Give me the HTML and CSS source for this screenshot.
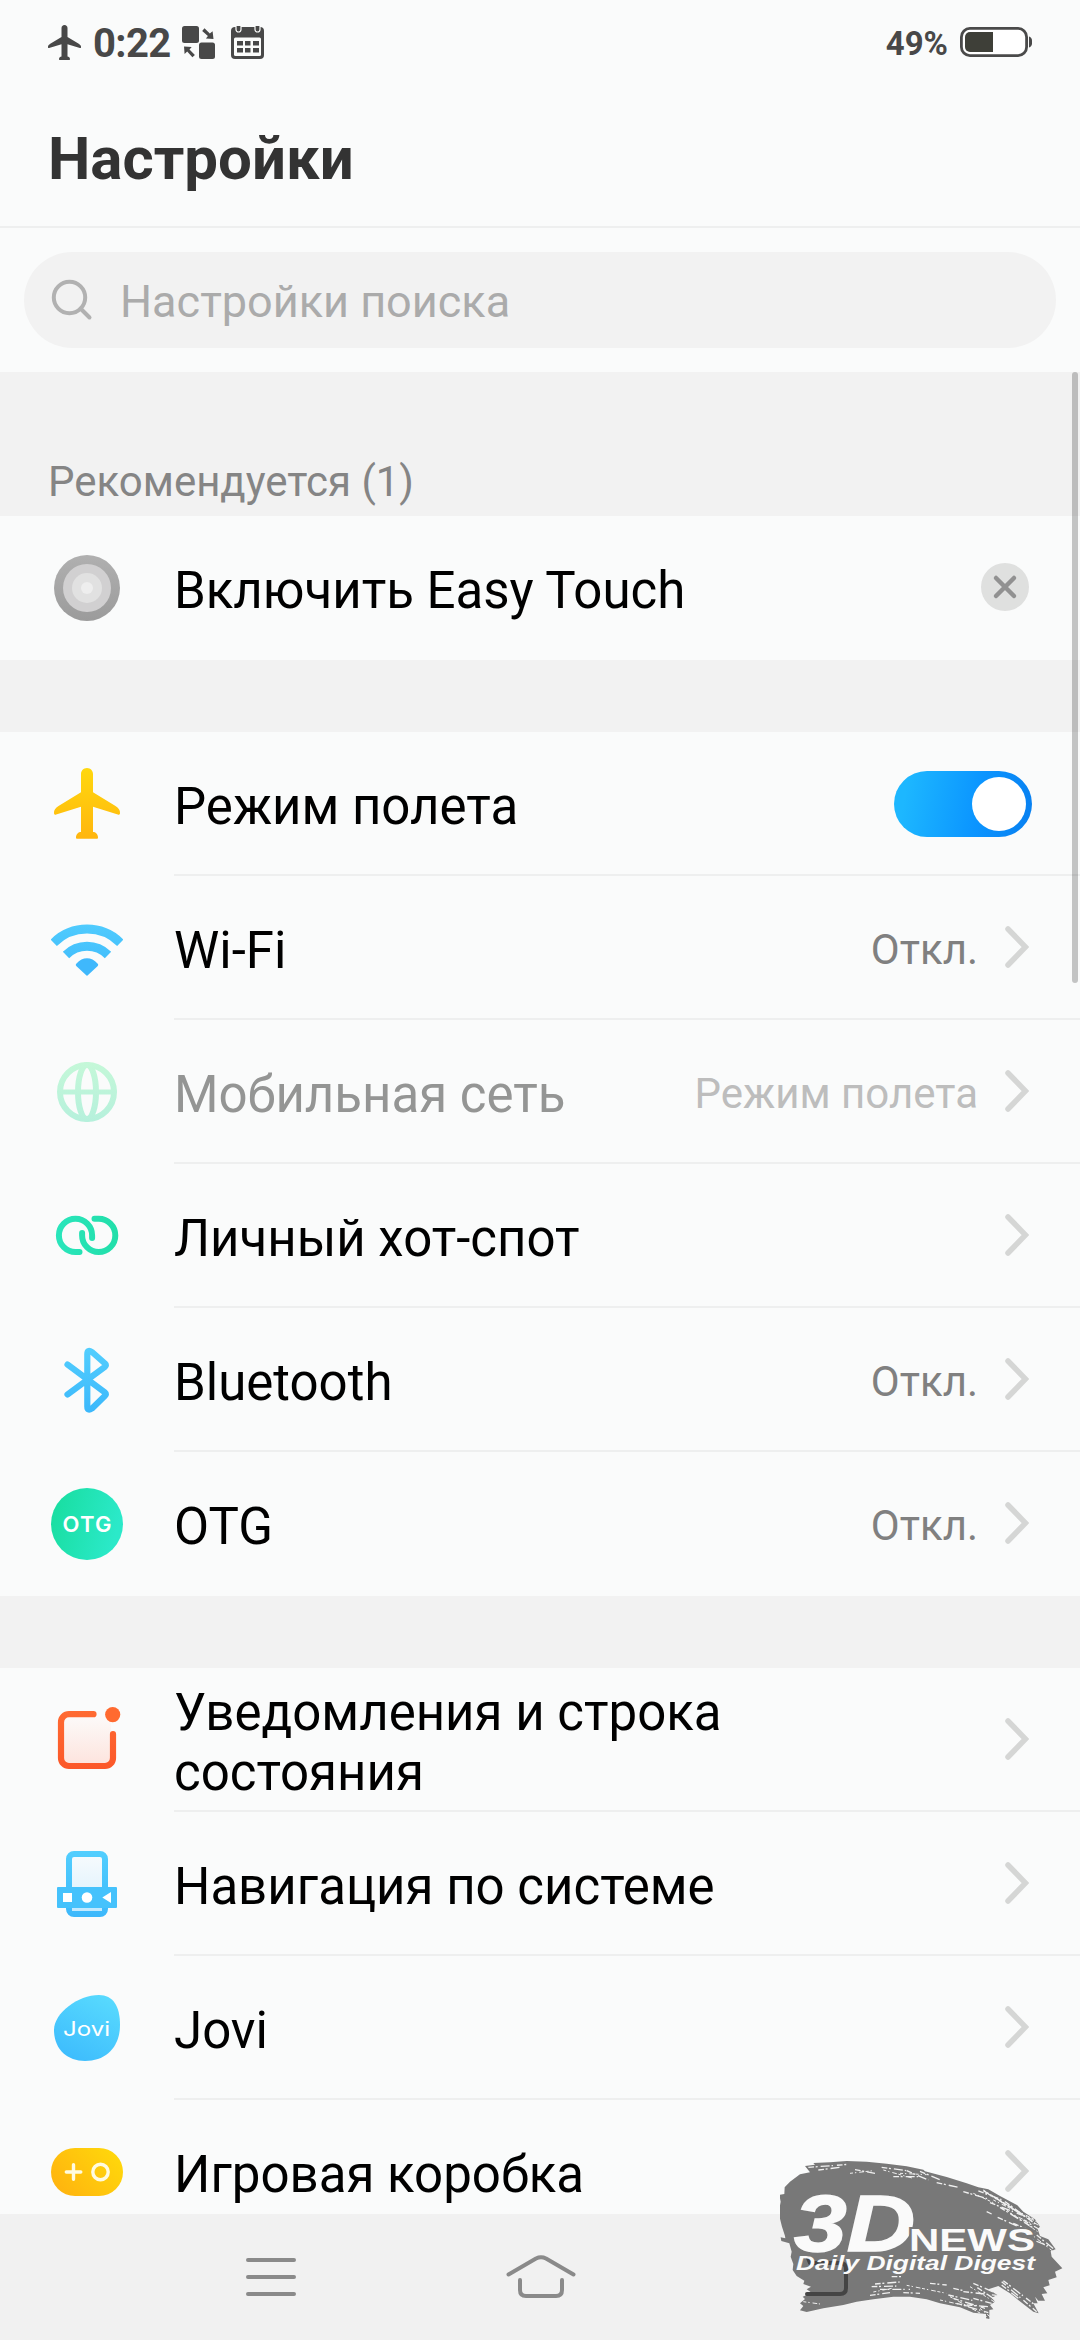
FILE: index.html
```html
<!DOCTYPE html>
<html lang="ru">
<head>
<meta charset="utf-8">
<title>Настройки</title>
<link rel="stylesheet" href="styles.css">
</head>
<body>
<svg class="defs" width="0" height="0" aria-hidden="true">
  <defs>
    <linearGradient id="yellow" x1="0" y1="0" x2="0" y2="72" gradientUnits="userSpaceOnUse"><stop offset="0" stop-color="#ffd80e"/><stop offset="1" stop-color="#ffb50e"/></linearGradient>
    <linearGradient id="blue" x1="0" y1="4" x2="0" y2="68" gradientUnits="userSpaceOnUse"><stop offset="0" stop-color="#52cefe"/><stop offset="1" stop-color="#3cb8fb"/></linearGradient>
    <linearGradient id="mint" x1="0" y1="4" x2="0" y2="68" gradientUnits="userSpaceOnUse"><stop offset="0" stop-color="#c5f8d8"/><stop offset="1" stop-color="#b5f0dc"/></linearGradient>
    <linearGradient id="green" x1="0" y1="0" x2="72" y2="0" gradientUnits="userSpaceOnUse"><stop offset="0" stop-color="#2ae6bd"/><stop offset="1" stop-color="#21dea8"/></linearGradient>
    <linearGradient id="otg" x1="0" y1="0" x2="72" y2="20" gradientUnits="userSpaceOnUse"><stop offset="0" stop-color="#17dd9d"/><stop offset="1" stop-color="#2be9c9"/></linearGradient>
    <linearGradient id="orange" x1="0" y1="0" x2="0" y2="72" gradientUnits="userSpaceOnUse"><stop offset="0" stop-color="#ff6d33"/><stop offset="1" stop-color="#fb5528"/></linearGradient>
    <linearGradient id="blush" x1="0" y1="0" x2="0" y2="1"><stop offset="0" stop-color="#fcfaf9"/><stop offset="1" stop-color="#fde4de"/></linearGradient>
    <linearGradient id="ice" x1="0" y1="0" x2="0" y2="1"><stop offset="0" stop-color="#f7fbfd"/><stop offset="1" stop-color="#d8effd"/></linearGradient>
    <linearGradient id="jovi" x1="20" y1="66" x2="52" y2="4" gradientUnits="userSpaceOnUse"><stop offset="0" stop-color="#3ebdfd"/><stop offset="1" stop-color="#57d9fe"/></linearGradient>
    <linearGradient id="game" x1="8" y1="60" x2="64" y2="12" gradientUnits="userSpaceOnUse"><stop offset="0" stop-color="#ffb30f"/><stop offset="1" stop-color="#ffd80b"/></linearGradient>
    <linearGradient id="ring" x1="0" y1="0" x2="0" y2="1"><stop offset="0" stop-color="#b0b0b0"/><stop offset="1" stop-color="#9b9b9b"/></linearGradient>
    <symbol id="chevron" viewBox="0 0 24 42"><path d="M3 3 20.500 21 3 39" fill="none" stroke="#d5d6d5" stroke-width="5.500" stroke-linecap="round"/></symbol>
    <symbol id="plane" viewBox="0 0 72 72"><path d="M36 0c3.600 0 6 2.800 6 6v18.300L64.500 38c3 2 4.800 4 4.500 7 0 1.700-.8 2-2.200 1.500L42 38.800V64c2.500 0 5 2 5 5.500 0 .9-.4 1.300-1.300 1.300H26.300c-.9 0-1.300-.4-1.300-1.300 0-3.500 2.500-5.500 5-5.500V38.800L5.200 46.500C3.800 47 3 46.700 3 45c-.3-3 1.500-5 4.500-7L30 24.300V6c0-3.200 2.400-6 6-6z"/></symbol>
  </defs>
</svg>

<div class="screen">
  <header class="status">
    <div class="status-left">
      <svg class="st-plane" viewBox="3 0 66 71" preserveAspectRatio="none"><use href="#plane" width="72" height="72"/></svg>
      <span class="time">0:22</span>
      <svg class="st-swap" viewBox="0 0 33 33"><rect width="17" height="17" rx="2.500"/><rect x="17" y="16.500" width="16" height="16.500" rx="2.500"/><path d="M22.500 2.200l5.300 5.300 2.800-2.200.900 7.700-7.600-.6 2-2.500-5.700-5zM2 20.500l7.700.6-2.200 2.400 5.400 5.500-2.500 2.300-5.200-5.700L2.600 28z"/></svg>
      <svg class="st-cal" viewBox="0 0 33 33"><path d="M4 1h25a4 4 0 0 1 4 4v24a4 4 0 0 1-4 4H4a4 4 0 0 1-4-4V5a4 4 0 0 1 4-4z"/><rect x="3" y="11.500" width="27" height="18.500" rx="1.500" fill="#fbfcfb"/><path d="M5 0v3.500a2.500 2.500 0 0 0 5 0V0M24 0v3.500a2.500 2.500 0 0 0 5 0V0" fill="#484848" stroke="#fbfcfb" stroke-width="1.200"/><path d="M6 15h6v4.500H6zm8 0h5.500v4.500H14zm8 0h6v4.500h-6zM6 22h6v4.500H6zm8 0h5.500v4.500H14zm8 0h6v4.500h-6z"/></svg>
    </div>
    <div class="status-right">
      <span class="percent">49%</span>
      <svg class="battery" viewBox="0 0 72 30"><rect x="1.400" y="1.400" width="65.200" height="27.200" rx="8.500" fill="#fff" stroke="#4a4a4a" stroke-width="2.800"/><path d="M10 5h23v20H10a5 5 0 0 1-5-5V10a5 5 0 0 1 5-5z" fill="#3e3f38"/><path d="M69 9.500c1.700.5 3 2 3 4v3c0 2-1.300 3.500-3 4z"/></svg>
    </div>
  </header>

  <h1 class="title">Настройки</h1>

  <div class="search-wrap">
    <div class="search">
      <svg class="search-icon" viewBox="0 0 42 42"><circle cx="18.500" cy="18.500" r="15.700"/><path d="M29.500 29.500 38.500 38.500"/></svg>
      <span>Настройки поиска</span>
    </div>
  </div>

  <main class="list">
    <h2 class="section">Рекомендуется (1)</h2>
    <section class="group">
      <div class="row">
        <svg class="icon" viewBox="0 0 72 72"><circle cx="36" cy="36" r="33" fill="url(#ring)"/><circle cx="36" cy="36" r="24" fill="#d1d0d1"/><circle cx="36" cy="36" r="15" fill="#e1e1e1"/><circle cx="36" cy="36" r="6" fill="#eeeeee"/></svg>
        <div class="cell"><span class="label">Включить Easy Touch</span>
          <svg class="close" viewBox="0 0 48 48"><circle cx="24" cy="24" r="24" fill="#dfe0df"/><path d="M15 15 33 33M33 15 15 33" stroke="#919191" stroke-width="4.500" stroke-linecap="round"/></svg>
        </div>
      </div>
    </section>

    <section class="group">
      <div class="row">
        <svg class="icon" viewBox="0 0 72 72"><use href="#plane" width="72" height="72" fill="url(#yellow)"/></svg>
        <div class="cell"><span class="label">Режим полета</span><span class="toggle"><span class="knob"></span></span></div>
      </div>
      <div class="row">
        <svg class="icon" viewBox="0 0 72 72"><g fill="none" stroke="url(#blue)" stroke-width="9"><path d="M2.700 30.800a47.300 47.300 0 0 1 66.600 0"/><path d="M15 43a29.700 29.700 0 0 1 42 0"/></g><path d="M25.500 51.500c6-7 15-7 21 0 1 1 .9 1.800 0 2.700L36.500 63.500q-.5.400-1 0L25.500 54.200c-.9-.9-1-1.700 0-2.700z" fill="#3fb8fc"/></svg>
        <div class="cell"><span class="label">Wi-Fi</span><span class="value">Откл.</span><svg class="chevron"><use href="#chevron"/></svg></div>
      </div>
      <div class="row disabled">
        <svg class="icon" viewBox="0 0 72 72"><g fill="none" stroke="url(#mint)" stroke-width="6"><circle cx="36" cy="36" r="27"/><ellipse cx="36" cy="36" rx="9" ry="27"/><path d="M9 36H63V36.010" stroke-width="5"/></g></svg>
        <div class="cell"><span class="label">Мобильная сеть</span><span class="value">Режим полета</span><svg class="chevron"><use href="#chevron"/></svg></div>
      </div>
      <div class="row">
        <svg class="icon" viewBox="0 0 72 72"><g fill="none" stroke="url(#green)" stroke-width="6" stroke-linecap="round"><path d="M28.500 52H24.500a16.600 16.600 0 1 1 16.600-16.600V38"/><path d="M43.500 18.800H47.700A16.600 16.600 0 1 1 31.100 35.400V33"/></g></svg>
        <div class="cell"><span class="label">Личный хот-спот</span><svg class="chevron"><use href="#chevron"/></svg></div>
      </div>
      <div class="row">
        <svg class="icon" viewBox="0 0 72 72"><path d="M16.500 20.500 54 48.500q1.800 1.600 0 3.300L41 64.500q-4.700 3-4.700-2V10q0-5 4.700-2L54 19.500q1.800 1.700 0 3.300L16.500 50.500" fill="none" stroke="url(#blue)" stroke-width="6.200" stroke-linecap="round" stroke-linejoin="round"/></svg>
        <div class="cell"><span class="label">Bluetooth</span><span class="value">Откл.</span><svg class="chevron"><use href="#chevron"/></svg></div>
      </div>
      <div class="row">
        <svg class="icon" viewBox="0 0 72 72"><circle cx="36" cy="36" r="36" fill="url(#otg)"/><text class="otg" x="36" y="44.300" text-anchor="middle" textLength="49">OTG</text></svg>
        <div class="cell"><span class="label">OTG</span><span class="value">Откл.</span><svg class="chevron"><use href="#chevron"/></svg></div>
      </div>
    </section>

    <section class="group">
      <div class="row">
        <svg class="icon" viewBox="0 0 72 72"><rect x="12" y="12" width="48" height="48" rx="4" fill="url(#blush)"/><path d="M42.500 10.200H18a8 8 0 0 0-8 8V54a8 8 0 0 0 8 8H54a8 8 0 0 0 8-8V30" fill="none" stroke="url(#orange)" stroke-width="6.200" stroke-linecap="round"/><circle cx="61.700" cy="10.600" r="7.600" fill="#ff6a30"/></svg>
        <div class="cell"><span class="label">Уведомления и строка состояния</span><svg class="chevron"><use href="#chevron"/></svg></div>
      </div>
      <div class="row">
        <svg class="icon" viewBox="0 0 72 72"><rect x="18" y="6" width="36" height="60" rx="5" fill="url(#ice)" stroke="url(#blue)" stroke-width="6"/><path d="M21 60H51V63H21z" fill="#c2e9fe"/><rect x="6" y="39" width="60" height="21" rx="1" fill="#45c2fc"/><path d="M12 45h9v9h-9zM51.300 49.500 60 44v11z" fill="#fff"/><circle cx="36" cy="49.500" r="5.300" fill="#fff"/></svg>
        <div class="cell"><span class="label">Навигация по системе</span><svg class="chevron"><use href="#chevron"/></svg></div>
      </div>
      <div class="row">
        <svg class="icon" viewBox="0 0 72 72"><path d="M48 3C62 3 69 14 69 33 69 55 55 69 34 69 16 69 3 57 3 38 3 21 27 3 48 3z" fill="url(#jovi)"/><text class="jovi" x="12" y="44" textLength="47" lengthAdjust="spacingAndGlyphs">Jovi</text></svg>
        <div class="cell"><span class="label">Jovi</span><svg class="chevron"><use href="#chevron"/></svg></div>
      </div>
      <div class="row">
        <svg class="icon" viewBox="0 0 72 72"><rect y="12" width="72" height="48" rx="24" fill="url(#game)"/><g fill="none" stroke="#fffbe0" stroke-width="3.400" stroke-linecap="round"><path d="M15.300 36h14.500M22.500 28.700v14.600"/><circle cx="49.500" cy="36" r="7.700"/></g></svg>
        <div class="cell"><span class="label">Игровая коробка</span><svg class="chevron"><use href="#chevron"/></svg></div>
      </div>
    </section>
    <span class="scrollbar"></span>
  </main>

  <nav class="navbar">
    <svg class="nav-icon" viewBox="0 0 72 48"><path d="M14 8H60M14 25H60M14 42H60"/></svg>
    <svg class="nav-icon" viewBox="0 0 72 48"><path d="M4.500 22.500 32 6.500q5-2.500 10 0L69.500 22.500M16 28v10q0 6 6 6H52q6 0 6-6V28"/></svg>
    <svg class="nav-icon" viewBox="0 0 72 48"></svg>
  </nav>

  <svg class="watermark" viewBox="0 0 300 170">
    <g transform="translate(-40 -30) scale(.33333)">
      <path class="brush" d="M195 108 225 104 220 99 270 97 320 93 380 95 440 101 500 109 550 119 555 124 620 141 680 160 715 172 745 178 780 198 832 226 850 245 885 268 900 290 893 297 900 318 925 328 947 358 932 364 935 380 967 415 945 425 950 442 925 450 929 466 910 472 922 490 905 492 915 512 895 512 885 500 893 520 880 520 896 550 880 545 850 522 810 490 775 468 745 478 772 495 755 503 765 515 750 525 760 538 748 540 748 567 738 565 738 552 700 548 660 532 600 520 560 508 510 500 460 500 400 508 350 515 310 525 250 535 200 546 180 541 190 528 180 520 195 507 188 500 215 488 200 478 213 470 190 462 193 452 170 438 158 420 160 402 152 380 155 365 148 340 124 333 122 322 136 325 135 318 126 290 116 250 122 215 118 195 133 192 134 172 150 155 180 133 210 127z"/>
      <g class="streaks">
        <path d="M205 112 275 107 325 103M235 120 300 112M345 119 405 130M425 112 500 122M460 140 535 140M500 122 565 150M540 124 600 149M590 158 655 172M670 185 745 207M715 183 790 211 893 287M730 182 820 236M750 218 870 265M745 192 848 254M780 232 880 294M740 245 755 252M773 262 830 288M820 280 885 308M850 270 910 305M890 315 945 360M855 320 935 352"/>
        <path d="M405 462 490 455M395 470 470 468M420 478 510 478M390 496 450 488M455 440 490 440M490 488 540 490M570 460 620 465M625 495 700 512M640 505 735 535M670 485 770 496M650 520 745 548M700 460 765 488M700 505 755 520M680 525 745 530M712 473 760 505M640 475 670 482M785 455 890 545M790 452 885 525M785 465 835 505"/>
      </g>
      <g class="streaks fine">
        <path d="M740 188 905 292M760 210 895 278M700 190 760 218M480 130 560 134M430 120 520 145M330 130 400 122M790 222 890 272M810 250 880 282M400 486 460 474M500 466 620 490M630 500 740 560M690 470 770 520M720 535 750 560M190 515 240 522M600 510 690 530M800 240 900 310M870 310 940 365M730 180 850 255"/>
      </g>
    </g>
    <path class="back" d="M27 134H60q6 0 6-6V109q0-6-6-6H30L28 98"/>
    <text class="wm-3d" x="14" y="90.500" textLength="121" lengthAdjust="spacingAndGlyphs">3D</text>
    <text class="wm-news" x="129" y="91" textLength="126" lengthAdjust="spacingAndGlyphs">NEWS</text>
    <text class="wm-tag" x="16" y="110" textLength="239" lengthAdjust="spacingAndGlyphs">Daily Digital Digest</text>
  </svg>
</div>
</body>
</html>
```
FILE: styles.css
```css
* { box-sizing: border-box; }

body {
  margin: 0;
  background: #fafbfb;
  font-family: Roboto, "Noto Sans", sans-serif;
  color: #000;
}

.defs { position: absolute; }

.screen {
  position: relative;
  display: flex;
  flex-direction: column;
  width: 1080px;
  height: 2340px;
  overflow: hidden;
}

/* Status bar */
.status {
  display: flex;
  justify-content: space-between;
  height: 84px;
  padding: 0 48px;
  color: #484848;
  fill: #484848;
}

.status-left,
.status-right { display: flex; align-items: center; }
.st-plane { width: 33px; height: 35px; margin-right: 12px; }
.time { width: 76px; margin-right: 13px; font-size: 40px; font-weight: 700; line-height: 84px; padding-top: 3px; letter-spacing: -0.6px; }
.st-swap { width: 33px; height: 33px; margin-right: 16px; }
.st-cal { width: 33px; height: 33px; }
.percent { margin-right: 12px; padding-top: 3px; font-size: 33px; font-weight: 700; line-height: 84px; }
.battery { width: 72px; height: 30px; }

/* Header */
.title {
  height: 144px;
  margin: 0;
  padding: 3px 48px 0;
  border-bottom: 2px solid #eeefef;
  font-size: 60px;
  font-weight: 700;
  line-height: 144px;
  color: #333;
}

.search-wrap { height: 144px; padding: 24px; }

.search {
  display: flex;
  align-items: center;
  gap: 27px;
  height: 96px;
  padding-left: 27px;
  border-radius: 48px;
  background: #f2f2f2;
  font-size: 45px;
  line-height: 96px;
  color: #ababab;
}

.search-icon {
  width: 42px;
  height: 42px;
  fill: none;
  stroke: #b1b1b1;
  stroke-width: 4;
  stroke-linecap: round;
}

.search span { padding-top: 3px; }

/* Settings list */
.list {
  position: relative;
  flex: 0 0 1842px;
  overflow: hidden;
  background: #f2f2f2;
}

.section {
  height: 144px;
  margin: 0;
  padding: 75px 48px 0;
  font-size: 42px;
  font-weight: 400;
  line-height: 70px;
  color: #858585;
}

.group { background: #fafbfb; }
.group + .group { margin-top: 72px; }

.row { display: flex; height: 144px; padding-left: 51px; }
.icon { flex: none; width: 72px; height: 72px; margin: 36px 51px 0 0; }

.cell {
  display: flex;
  flex: 1;
  align-items: center;
  padding-right: 48px;
  border-bottom: 2px solid #eeefef;
}

.row:last-child .cell { border-bottom-color: transparent; }

.label {
  flex: 1;
  max-width: 620px;
  padding-top: 8px;
  font-size: 51px;
  line-height: 60px;
}

.value {
  margin-left: auto;
  margin-right: 27px;
  padding-top: 6px;
  font-size: 42px;
  line-height: 50px;
  color: #808080;
}

.label ~ .close,
.label ~ .toggle,
.label + .chevron { margin-left: auto; }
.chevron { flex: none; width: 24px; height: 42px; margin-right: 3px; }
.close { width: 48px; height: 48px; margin-right: 3px; }
.disabled .label { color: #949594; }
.disabled .value { color: #bdbdbd; }

.toggle {
  display: flex;
  justify-content: flex-end;
  width: 138px;
  height: 66px;
  margin-top: 2px;
  padding: 6px;
  border-radius: 33px;
  background: linear-gradient(100deg, #1db7ff 10%, #0b95ff 60%, #087ff0);
}

.knob { width: 54px; height: 54px; border-radius: 50%; background: #fff; }

.otg { font: 600 22px Inter, sans-serif; fill: #fff; }
.jovi { font: 400 20px Inter, sans-serif; fill: #fff; }

.scrollbar {
  position: absolute;
  top: 0;
  right: 2px;
  width: 6px;
  height: 611px;
  border-radius: 3px;
  background: rgba(0, 0, 0, .22);
}

/* Navigation bar */
.navbar {
  display: flex;
  justify-content: center;
  gap: 198px;
  height: 126px;
  padding-top: 38px;
  background: #f1f1f1;
}

.nav-icon {
  width: 72px;
  height: 48px;
  fill: none;
  stroke: #8a8a8a;
  stroke-width: 4;
  stroke-linecap: round;
  stroke-linejoin: round;
}

/* Overlaid publisher mark */
.watermark { position: absolute; left: 780px; top: 2160px; width: 300px; height: 170px; }
.brush { fill: #787878; }
.streaks { fill: none; stroke: #f0f0f0; stroke-width: 4; stroke-dasharray: 17 5 6 9 27 6 4 12; }
.fine { stroke-width: 3; stroke-dasharray: 9 6 4 9 14 5; }
.back { fill: none; stroke: #444; stroke-width: 4; stroke-linecap: round; stroke-linejoin: round; }
.watermark text { fill: #fafafa; font-family: "Liberation Sans", sans-serif; }
.wm-3d { font-size: 79px; font-weight: 700; font-style: italic; stroke: #fafafa; stroke-width: 1.5; }
.watermark .wm-news { font-size: 31px; font-weight: 700; stroke: #787878; stroke-width: 4; paint-order: stroke; }
.wm-tag { font-size: 20px; font-weight: 700; font-style: italic; }
```
